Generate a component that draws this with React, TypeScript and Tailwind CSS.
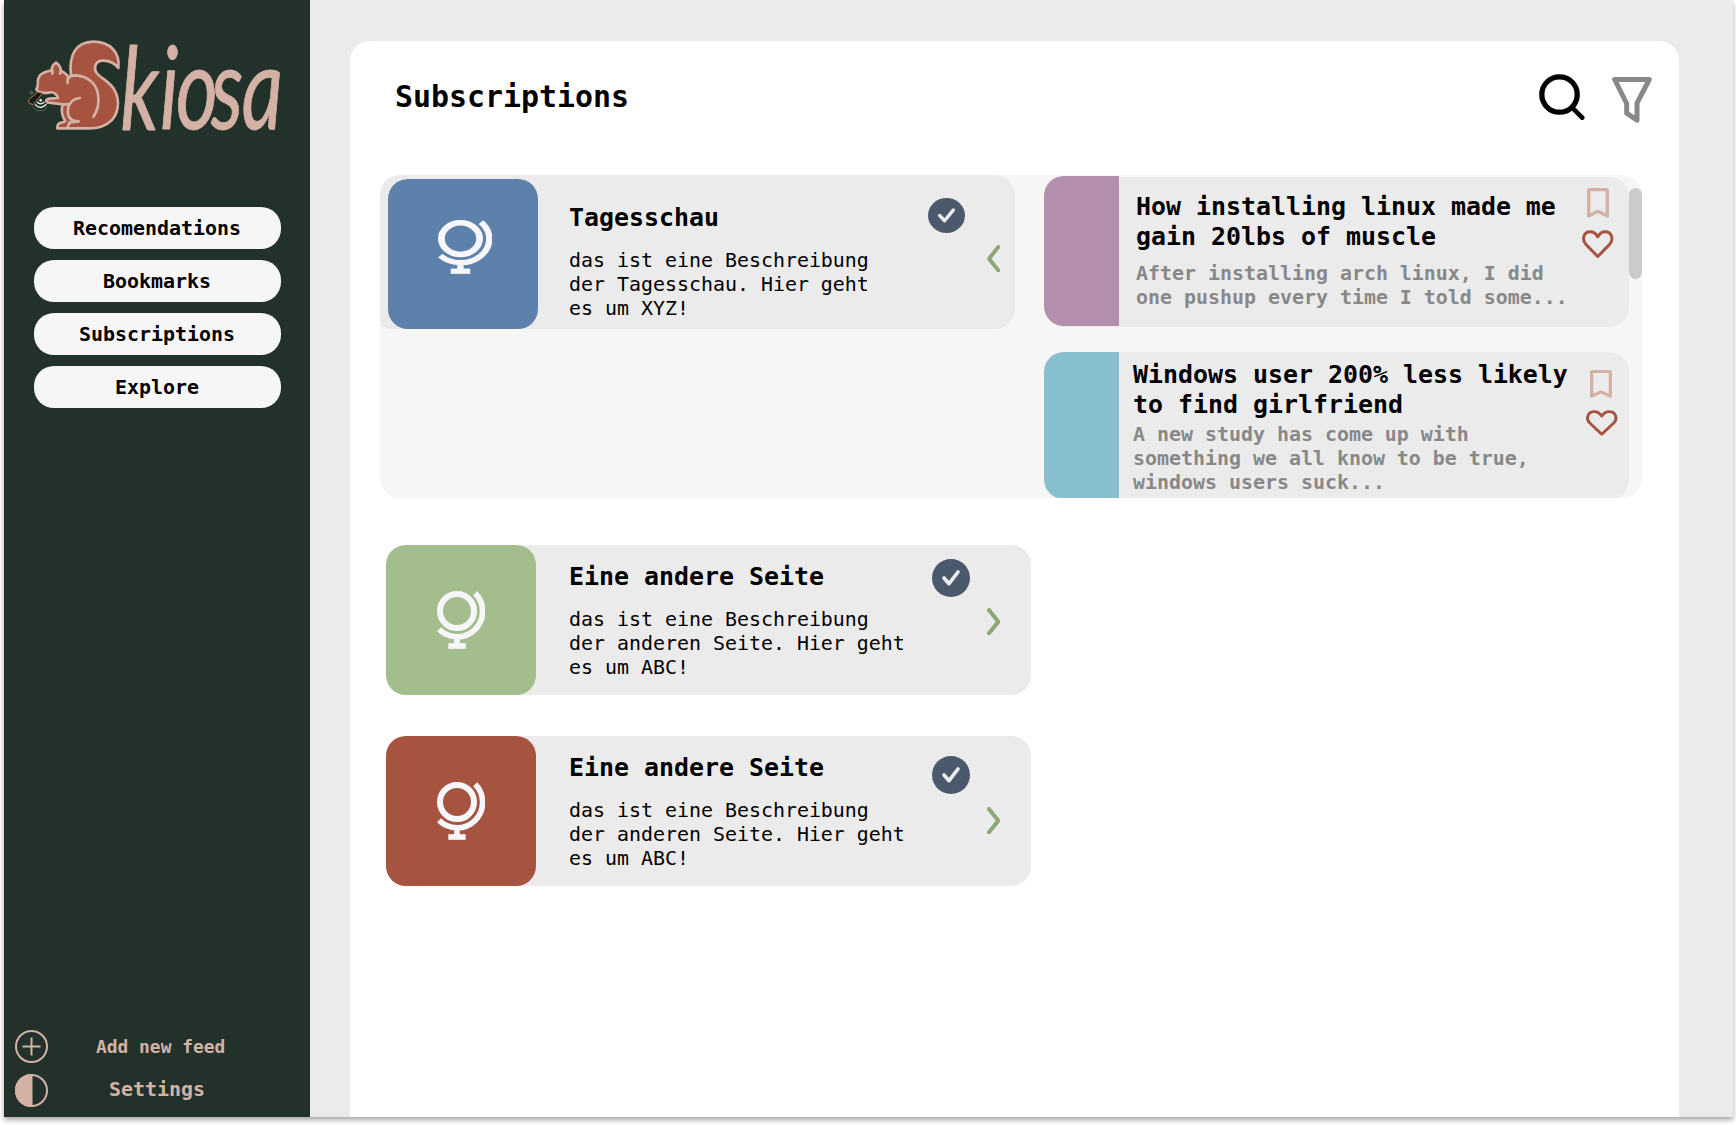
import React from "react";

const NAV = ["Recomendations", "Bookmarks", "Subscriptions", "Explore"];

function Logo() {
  return (
    <svg className="overflow-visible" width="260" height="100" viewBox="78 50 780 300" fill="none" aria-label="Skiosa">
      <g stroke="#d4b1a5" strokeWidth="8" strokeLinejoin="round" strokeLinecap="round">
        <path
          fill="#a65340"
          d="M213 165C206 105 226 65 280 64C330 64 361 96 355 143C342 126 322 120 305 121C285 124 280 145 290 158C302 174 331 184 344 210C361 240 357 286 325 308C308 321 288 324 270 324H172C171 312 177 306 192 305L196 302C184 285 184 266 188 252L142 246C135 241 139 236 150 235L174 233C172 222 160 214 150 216C134 220 114 217 109 207C119 196 108 182 118 168C126 155 145 152 155 150C155 140 160 132 168 127C176 132 182 141 183 152C196 156 205 168 206 174Z"
        />
        <path d="M203 188V175C208 167 215 165 226 165C263 167 289 189 294 222C298 249 291 274 280 289" />
        <path d="M240 233C213 235 201 258 204 281C207 298 219 303 236 303L208 307L203 321M188 252H205M157 160V150M180 160L183 152" />
      </g>
      <path d="M85 239L113 215L128 219L99 253L88 249Z" fill="#171c19" stroke="#bd7c43" strokeWidth="3" />
      <circle cx="94" cy="217" r="4" stroke="#8b9692" strokeWidth="2" />
      <path d="M97 258L110 271H132L142 258" stroke="#6f7c75" strokeWidth="2" />
      <path d="M105 252Q121 271 139 252M111 245Q122 256 133 245" stroke="#eef2ef" strokeWidth="4" />
      <circle cx="122" cy="240" r="4" fill="#eef2ef" />
      <text
        transform="translate(0 327) scale(0.7 1)"
        x="517 686 754 904 1036"
        y="0"
        fill="#d4b1a5"
        stroke="#d4b1a5"
        strokeWidth="3"
        strokeLinejoin="round"
        className="font-['Lato'] text-[345px] font-normal italic"
      >
        kiosa
      </text>
    </svg>
  );
}

function Globe({ className }: { className: string }) {
  return (
    <svg className={className} viewBox="201 183 144 174" preserveAspectRatio="none" fill="none" stroke="#f7f7fb">
      <circle cx="261" cy="243" r="51" strokeWidth="18" />
      <path d="M315.500 190A76 76 0 0 1 207 298M261 318V348" strokeWidth="17" />
      <path d="M235 348H287" strokeWidth="17" />
    </svg>
  );
}

function Check({ className }: { className: string }) {
  return (
    <svg className={className} viewBox="96 86 114 114" preserveAspectRatio="none" fill="none">
      <circle cx="153" cy="143" r="57" fill="#4a5a6c" />
      <path d="M132 143L147 160L174 125" stroke="#ebebeb" strokeWidth="11" strokeLinecap="round" strokeLinejoin="round" />
    </svg>
  );
}

function Chevron({ className }: { className: string }) {
  return (
    <svg className={className} viewBox="261 233 40 82" fill="none">
      <path d="M267 239L295 274L267 309" stroke="#8ca877" strokeWidth="12" strokeLinecap="round" strokeLinejoin="round" />
    </svg>
  );
}

function Bookmark({ className }: { className: string }) {
  return (
    <svg className={className} viewBox="561 504 66 90" preserveAspectRatio="none" fill="none">
      <path d="M569 509H619Q622 509 622 512V588L594 574L566 588V512Q566 509 569 509Z" stroke="#d4b1a5" strokeWidth="10" strokeLinejoin="round" />
    </svg>
  );
}

function Heart({ className }: { className: string }) {
  return (
    <svg className={`overflow-visible ${className}`} viewBox="546 629 95 85" preserveAspectRatio="none" fill="none">
      <path
        d="M593.500 708L557 671C545 657 551 634 571 634C583 634 589 641 593.500 649C598 641 604 634 616 634C636 634 642 657 630 671Z"
        stroke="#a65340"
        strokeWidth="9"
        strokeLinejoin="round"
      />
    </svg>
  );
}

type FeedProps = {
  title: string;
  lines: string[];
  card: string;
  tile: string;
  globe: string;
  body: string;
  check: string;
  chevron: string;
};

function FeedCard({ title, lines, card, tile, globe, body, check, chevron }: FeedProps) {
  return (
    <article className={`flex shrink-0 items-start rounded-[20px] bg-[#ebebeb] ${card}`}>
      <div className={`size-[150px] shrink-0 rounded-[20px] ${tile}`}>
        <Globe className={globe} />
      </div>
      <div className={`w-[349px] shrink-0 whitespace-nowrap ${body}`}>
        <h2 className="text-[24.92px] leading-[30px] font-bold">{title}</h2>
        <div className="mt-4 text-[19.93px] leading-6">
          {lines.map((l) => (
            <p key={l}>{l}</p>
          ))}
        </div>
      </div>
      <Check className={`shrink-0 ${check}`} />
      <Chevron className={`h-[27.300px] w-[13.300px] shrink-0 ${chevron}`} />
    </article>
  );
}

type ArticleProps = {
  title: string[];
  lines: string[];
  card: string;
  swatch: string;
  body: string;
  gap: string;
  icons: string;
  bookmark: string;
  heart: string;
};

function ArticleCard({ title, lines, card, swatch, body, gap, icons, bookmark, heart }: ArticleProps) {
  return (
    <article className={`flex w-[585px] shrink-0 items-start rounded-[20px] bg-[#ebebeb] ${card}`}>
      <div className={`w-[75px] shrink-0 rounded-l-[20px] ${swatch}`} />
      <div className={`w-[439px] shrink-0 whitespace-nowrap ${body}`}>
        <h3 className="text-[24.92px] leading-[30px] font-bold">
          {title.map((l) => (
            <span key={l} className="block">{l}</span>
          ))}
        </h3>
        <div className={`text-[19.93px] leading-6 font-bold text-[#888888] ${gap}`}>
          {lines.map((l) => (
            <p key={l}>{l}</p>
          ))}
        </div>
      </div>
      <div className={`flex shrink-0 flex-col items-center ${icons}`}>
        <Bookmark className={bookmark} />
        <Heart className={heart} />
      </div>
    </article>
  );
}

export default function App() {
  return (
    <div className="h-[1125px] w-[1736px] overflow-hidden bg-white pr-[3px] pl-1 font-['DejaVu_Sans_Mono',monospace] text-black">
      <div className="flex h-[1117px] bg-[#ebebeb] shadow-[0_3px_5px_rgba(0,0,0,0.35)]">
        <aside className="flex w-[306px] shrink-0 flex-col bg-[#23312b]">
          <div className="mt-[37px] ml-[22px] h-[100px]">
            <Logo />
          </div>
          <nav className="mt-[70px] ml-[30px] flex w-[247px] flex-col gap-[11px]">
            {NAV.map((n) => (
              <button key={n} className="h-[42px] rounded-[20px] bg-[#f6f6f6] pt-px pr-px text-[19.93px] leading-[42px] font-bold">
                {n}
              </button>
            ))}
          </nav>
          <div className="mt-auto mb-[10px] ml-[11px] flex flex-col gap-[11px] text-[#d4b1a5]">
            <div className="flex h-[33px] items-center">
              <svg className="size-[33px]" viewBox="0 0 33 33" fill="none" stroke="currentColor" strokeWidth="2">
                <circle cx="16.500" cy="16.500" r="15.500" />
                <path d="M16.500 7.500V25.500M7.500 16.500H25.500" />
              </svg>
              <span className="ml-12 text-[17.900px] leading-6 font-bold">Add new feed</span>
            </div>
            <div className="flex h-[33px] items-center">
              <svg className="size-[33px]" viewBox="0 0 33 33" fill="none" stroke="currentColor" strokeWidth="2">
                <circle cx="16.500" cy="16.500" r="15.500" />
                <path d="M16.500 1A15.500 15.500 0 0 0 16.500 32Z" fill="currentColor" />
              </svg>
              <span className="mb-0.5 ml-[61px] text-[19.930px] leading-6 font-bold">Settings</span>
            </div>
          </div>
        </aside>

        <main className="mt-[41px] ml-10 flex w-[1329px] flex-col rounded-t-[20px] bg-white">
          <header className="flex h-[134px] shrink-0 items-start">
            <h1 className="mt-[38px] ml-[45px] text-[29.900px] leading-9 font-bold">Subscriptions</h1>
            <svg className="mt-[33px] ml-auto h-[46px] w-[46px]" viewBox="117 71 138 139" fill="none" stroke="#000" strokeLinecap="round">
              <circle cx="178.500" cy="133" r="53.500" strokeWidth="16" />
              <path d="M219 175L247 203" strokeWidth="14" />
            </svg>
            <svg className="mt-[36px] mr-[27px] ml-[27px] h-[46px] w-10" viewBox="336 80 120 137" fill="none" stroke="#888" strokeWidth="15" strokeLinejoin="round">
              <path d="M344 87H448L411 158V209L380 188V159Z" />
            </svg>
          </header>

          <section className="ml-[30px] flex h-[323px] w-[1262px] shrink-0 items-start overflow-hidden rounded-[20px] bg-[#f6f6f6]">
            <FeedCard
              title="Tagesschau"
              lines={["das ist eine Beschreibung", "der Tagesschau. Hier geht", "es um XYZ!"]}
              card="-ml-2 h-[154px] w-[643px] pt-1 pl-4"
              tile="bg-[#5e81ac]"
              globe="mt-[41px] ml-[50px] h-[54px] w-[54px]"
              body="ml-[31px] mt-6"
              check="mt-[19px] h-[35px] w-[37px] ml-[10px]"
              chevron="mt-[66px] ml-[22px] -scale-x-100"
            />
            <div className="ml-[29px] flex w-[585px] shrink-0 flex-col gap-[25px]">
              <ArticleCard
                title={["How installing linux made me", "gain 20lbs of muscle"]}
                lines={["After installing arch linux, I did", "one pushup every time I told some..."]}
                card="mt-0.5 h-[150px]"
                swatch="-mt-px h-[150px] bg-[#b48ead]"
                body="ml-[17px] mt-[15px]"
                gap="mt-[10px]"
                icons="ml-[7px] mt-[11px]"
                bookmark="h-[30px] w-[22px]"
                heart="mt-[11.500px] h-[28.500px] w-[31.500px]"
              />
              <ArticleCard
                title={["Windows user 200% less likely", "to find girlfriend"]}
                lines={["A new study has come up with", "something we all know to be true,", "windows users suck..."]}
                card="h-[148px]"
                swatch="h-[147px] bg-[#88bfce]"
                body="ml-[14px] mt-[8px]"
                gap="mt-[3px]"
                icons="ml-[13.500px] mt-[17.500px]"
                bookmark="h-[28px] w-[22px]"
                heart="mt-[12px] h-[26px] w-[31.500px]"
              />
            </div>
            <div className="mt-[13px] h-[91px] w-[13px] shrink-0 rounded-full bg-[#cbcbcb]" />
          </section>

          <div className="mt-[47px] ml-9 flex flex-col gap-[41px]">
            <FeedCard
              title="Eine andere Seite"
              lines={["das ist eine Beschreibung", "der anderen Seite. Hier geht", "es um ABC!"]}
              card="h-[150px] w-[645px]"
              tile="bg-[#a3be8c]"
              globe="mt-[46px] ml-[51px] h-[58px] w-12"
              body="ml-[33px] mt-[17px]"
              check="ml-[14px] mt-[14px] size-[38px]"
              chevron="ml-[17px] mt-[63px]"
            />
            <FeedCard
              title="Eine andere Seite"
              lines={["das ist eine Beschreibung", "der anderen Seite. Hier geht", "es um ABC!"]}
              card="h-[150px] w-[645px]"
              tile="bg-[#a65340]"
              globe="mt-[46px] ml-[51px] h-[58px] w-12"
              body="ml-[33px] mt-[17px]"
              check="ml-[14px] mt-5 size-[38px]"
              chevron="ml-[17px] mt-[71px]"
            />
          </div>
        </main>
      </div>
    </div>
  );
}
